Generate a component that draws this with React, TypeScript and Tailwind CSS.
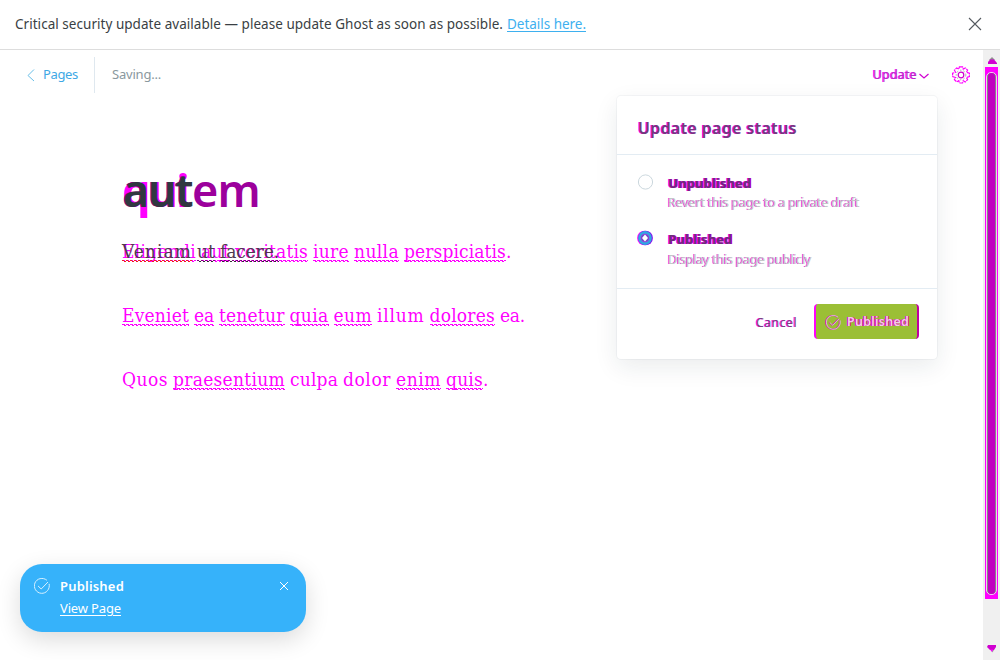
import { useLayoutEffect, useRef } from 'react';

type FitProps = { w: number; className?: string; children: string };

/* Tracks a run of text so that it fills the given width. */
function Fit({ w, className = '', children }: FitProps) {
  const ref = useRef<HTMLSpanElement>(null);
  useLayoutEffect(() => {
    const el = ref.current;
    if (!el) return;
    el.style.letterSpacing = '0px';
    const natural = el.getBoundingClientRect().width;
    el.style.letterSpacing = `${(w - natural) / children.length}px`;
  }, [w, children]);
  return (
    <span ref={ref} className={`inline-block whitespace-pre ${className}`}>
      {children}
    </span>
  );
}

type Word = [text: string, width: number, marked?: boolean];

const squiggle =
  'bg-[image:repeating-linear-gradient(90deg,#f0f_0_3px,transparent_3px_4px),repeating-linear-gradient(90deg,transparent_0_2px,#f0f_2px_4px)] bg-[length:100%_1px] bg-no-repeat [background-position:0_25px,0_26px]';
const redSquiggle =
  'bg-[image:repeating-linear-gradient(90deg,#f02020_0_2px,transparent_2px_4px),repeating-linear-gradient(90deg,transparent_0_2px,#f02020_2px_4px)] bg-[length:100%_1px] bg-no-repeat [background-position:0_25px,0_26px]';
const darkSquiggle =
  'bg-[image:repeating-linear-gradient(90deg,#800080_0_2px,transparent_2px_4px),repeating-linear-gradient(90deg,transparent_0_2px,#303030_2px_4px)] bg-[length:100%_1px] bg-no-repeat [background-position:0_25px,0_26px]';

function Line({ words }: { words: Word[] }) {
  return (
    <p className="flex h-8 gap-[5px] text-[#f0f]">
      {words.map(([text, width, marked], i) => {
        const dot = marked && text.endsWith('.');
        return (
          <span key={i} className="flex">
            <span className={marked ? squiggle : ''}>
              <Fit w={width}>{dot ? text.slice(0, -1) : text}</Fit>
            </span>
            {dot && <span>.</span>}
          </span>
        );
      })}
    </p>
  );
}

function CheckCircle({ className }: { className: string }) {
  return (
    <svg viewBox="0 0 16 16" fill="none" stroke="currentColor" strokeLinecap="round" className={className}>
      <path d="M15.2 6.2A7.5 7.5 0 1 1 12.6 2" />
      <path d="M4.3 8.2 7.2 11l6.5-6.7" />
    </svg>
  );
}

function Gear() {
  return (
    <svg viewBox="0 0 18 18" className="size-[18px]" fill="none">
      <path
        d="M7.400.8h3.200l.6 2.300 2.100-1.200 2.300 2.300-1.200 2.100 3 .9v3.400l-3 .9 1.200 2.100-2.300 2.300-2.100-1.200-.6 2.300H7.400l-.6-2.300-2.100 1.200-2.300-2.300 1.200-2.100-3-.9V7.200l3-.9-1.200-2.100 2.300-2.300 2.100 1.200z"
        stroke="#f0f"
        strokeWidth="1.2"
        strokeDasharray="4 .7"
      />
      <circle cx="9" cy="9" r="4.800" stroke="#a8a0a8" strokeDasharray="1.500 2" />
      <circle cx="9" cy="9" r="2.800" stroke="#d000d0" strokeWidth="1.200" />
    </svg>
  );
}

function Radio({ on }: { on?: boolean }) {
  return (
    <svg viewBox="0 0 18 18" className="mt-[8px] size-[18px] shrink-0" fill="none">
      {on ? (
        <>
          <circle cx="8.4" cy="9" r="7.3" fill="#f0f" />
          <circle cx="9.6" cy="9" r="7.3" fill="#8b00f0" />
          <circle cx="9" cy="9" r="6.9" fill="#32a6e0" />
          <circle cx="9" cy="9" r="4.300" fill="#d020e8" />
          <circle cx="9" cy="9" r="3.800" fill="#6a50c8" />
          <path d="M9 5.600 12 9 9 12.400 6 9z" fill="#fff" />
        </>
      ) : (
        <circle cx="9.5" cy="9" r="7.1" stroke="#c5d2d9" strokeWidth=".9" />
      )}
    </svg>
  );
}

type OptionProps = { label: string; w: number; hint: string; hintW: number; on?: boolean };

function Option({ label, w, hint, hintW, on }: OptionProps) {
  return (
    <div className="flex h-[56px] gap-[13px] pl-[20px]">
      <div className="-ml-px">
        <Radio on={on} />
      </div>
      <div className="ml-px flex flex-col pt-[9px]">
        <Fit w={w} className="self-start text-[13px] leading-[18px] font-bold text-[#6a3078] [text-shadow:-1px_0_#f0f,1px_0_#c000c0]">
          {label}
        </Fit>
        <Fit w={hintW} className={`self-start text-[13px] leading-5 text-[#c4c8c8] [text-shadow:-1px_0_#e030e0] ${on ? 'mt-px' : ''}`}>
          {hint}
        </Fit>
      </div>
    </div>
  );
}

export default function App() {
  return (
    <div className="relative flex h-[660px] w-[1000px] flex-col overflow-hidden bg-white font-['Noto_Sans','Open_Sans',sans-serif]">
      <header className="flex h-[50px] shrink-0 items-center border-b border-[#dddddd] pr-[18px] pl-[15px] text-[13.5px]">
        <Fit w={488} className="text-[#3a3f44]">
          Critical security update available — please update Ghost as soon as possible.
        </Fit>
        <a className="ml-[4px]">
          <Fit w={79} className="text-[#3eb0ef] underline underline-offset-2">Details here.</Fit>
        </a>
        <svg viewBox="0 0 14 14" className="mb-[2px] ml-auto size-[14px]" stroke="#555a60" strokeWidth="1.1">
          <path d="M1 1l12 12M13 1 1 13" />
        </svg>
      </header>

      <div className="flex min-h-0 flex-1">
        <main className="flex-1">
          <nav className="flex h-[49px] items-center pl-[26px] text-[13px]">
            <svg viewBox="0 0 10 14" className="mr-[7px] h-[14px] w-[10px]" fill="none" stroke="#69bfe8">
              <path d="M8 1.500 2 7.500l6 5.500" />
            </svg>
            <Fit w={35} className="text-[#3ea8e5]">Pages</Fit>
            <span className="mr-[15px] ml-[16px] h-9 w-px bg-[#dfe8ef]" />
            <Fit w={49} className="ml-[2px] text-[#8a989e]">Saving...</Fit>
            <span className="mt-[2px] ml-auto flex items-center gap-[2px]">
              <Fit w={44} className="text-[12.5px] text-[#b030c8] [text-shadow:-1px_0_#f0f]">Update</Fit>
              <svg viewBox="0 0 10 6" className="mt-px h-[6px] w-[10px]" fill="none" stroke="#d000d0" strokeWidth="1.2">
                <path d="M.5 1 5 5l4.500-4" />
              </svg>
            </span>
            <span className="mr-[13px] ml-[23px]">
              <Gear />
            </span>
          </nav>

          <article className="pl-[122px]">
            <h1 className="mt-[59px] grid h-[64px] text-[45px] leading-[64px] font-bold">
              <span className="text-[#f0f] [grid-area:1/1]">
                <Fit w={66}>qui</Fit>
              </span>
              <span className="flex pl-px [grid-area:1/1]">
                <Fit w={69} className="font-semibold text-[#303840] [text-shadow:-1px_0_#80008a]">aut</Fit>
                <Fit w={68} className="font-semibold text-[#9c009c]">em</Fit>
              </span>
            </h1>
            <div className="mt-[13px] flex flex-col gap-8 font-['DejaVu_Serif_Condensed','DejaVu_Serif',serif] text-[19px] leading-[33px]">
              <div className="grid h-8">
                <div className="[grid-area:1/1]">
                  <Line words={[['Eligendi', 74, true], ['aut', 29, true], ['veritatis', 73, true], ['iure', 36, true], ['nulla', 45, true], ['perspiciatis.', 102, true]]} />
                </div>
                <p className="flex gap-[5px] text-[#503a50] [grid-area:1/1]">
                  <span className={redSquiggle}><Fit w={70}>Veniam</Fit></span>
                  <span className={darkSquiggle}><Fit w={18}>ut</Fit></span>
                  <span className={darkSquiggle}><Fit w={59}>facere.</Fit></span>
                </p>
              </div>
              <Line words={[['Eveniet', 67, true], ['ea', 20, true], ['tenetur', 65.5, true], ['quia', 39, true], ['eum', 38.5, true], ['illum', 47.5], ['dolores', 65.5, true], ['ea.', 25]]} />
              <Line words={[['Quos', 46], ['praesentium', 112, true], ['culpa', 48], ['dolor', 48, false], ['enim', 45, true], ['quis.', 37, true]]} />
            </div>
          </article>
        </main>

        <div className="flex w-[17px] flex-col items-center bg-[#f0f0f0] pt-[7px] pb-[7px]">
          <svg viewBox="0 0 10 8" className="h-2 w-[10px]">
            <path d="M5 0 8 3H2z" fill="#909090" />
            <path d="M3 2.500h4l3 3.500v1H1V5z" fill="#d000d0" />
          </svg>
          <div className="mt-[2px] h-[532px] w-[13px] bg-[#f0f] px-[1px] pt-[5px] pb-[4px]">
            <div className="h-full rounded-[5px] border border-[#f4c8f4] bg-[#858585] px-px">
              <div className="h-full rounded-[4px] bg-[#c000c0]" />
            </div>
          </div>
          <svg viewBox="0 0 10 8" className="mt-auto h-2 w-[10px]">
            <path d="M1 0h8v2L7 5H3L0 2z" fill="#d000d0" />
            <path d="M4 5h3L5.500 7.500z" fill="#a0a0a0" />
            <path d="M3 4.500h3L5 7z" fill="#f0f" />
          </svg>
        </div>
      </div>

      <section className="absolute top-[96px] left-[617px] flex h-[263px] w-[320px] flex-col rounded-[4px] bg-white shadow-[0_0_0_1px_rgba(99,114,130,0.06),0_8px_24px_rgba(27,39,51,0.09)]">
        <div className="flex h-[59px] items-center border-b border-[#e3ecf3] pt-[5px] pl-[21px]">
          <Fit w={159} className="text-[16px] font-semibold text-[#703c7c] [text-shadow:-1px_0_#f0f]">
            Update page status
          </Fit>
        </div>
        <div className="flex h-[134px] flex-col border-b border-[#e3ecf3] pt-[10px]">
          <Option label="Unpublished" w={83} hint="Revert this page to a private draft" hintW={191} />
          <Option label="Published" w={64} hint="Display this page publicly" hintW={143} on />
        </div>
        <div className="flex flex-1 items-center justify-end pr-[18px] pb-[5px]">
          <Fit w={41} className="mt-[3px] mr-[17px] text-[12.5px] text-[#75457f] [text-shadow:-1px_0_#f0f]">Cancel</Fit>
          <button className="flex h-[35px] w-[105px] items-center rounded-[4px] border-x-2 border-l-[#f0f] border-r-[#c000a0] bg-[#9bbf35] pt-[2px] pl-[10px]">
            <span className="mr-[6px] text-[#e0b0e0] [filter:drop-shadow(-1px_0_0_#d61cb4)]">
              <CheckCircle className="size-[15px]" />
            </span>
            <Fit w={62} className="text-[12.5px] font-semibold text-[#eed0e4] [text-shadow:-1px_0_#f000d0,1px_0_#c82090]">Published</Fit>
          </button>
        </div>
      </section>

      <aside className="absolute top-[564px] left-[20px] flex h-[68px] w-[286px] rounded-[22px] bg-[#36b2fa] pt-[13px] pl-[14px] text-[13px] text-white shadow-[0_8px_24px_rgba(0,0,0,0.14)]">
        <CheckCircle className="mt-px mr-[10px] size-4 text-[#d7f0ff]" />
        <div className="flex flex-col">
          <Fit w={64} className="self-start leading-[18px] font-semibold">Published</Fit>
          <a className="mt-[4px] leading-[18px]">
            <Fit w={61} className="underline underline-offset-2">View Page</Fit>
          </a>
        </div>
        <svg viewBox="0 0 10 10" className="mt-[4px] mr-[17px] ml-auto size-[10px]" stroke="#fff">
          <path d="M1 1l8 8M9 1 1 9" />
        </svg>
      </aside>
    </div>
  );
}
